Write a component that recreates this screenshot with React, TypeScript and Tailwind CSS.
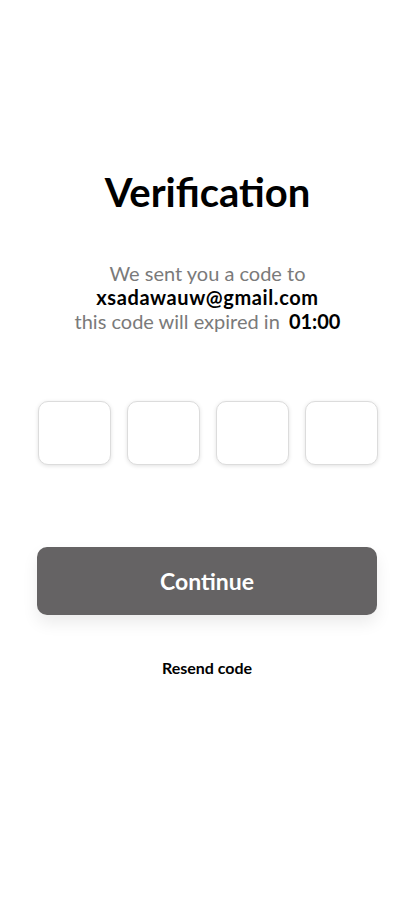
import React from 'react'

export default function App() {
    const digits = ['', '', '', '']

    return (
        <div className="min-h-[917px] w-full bg-white flex flex-col items-center font-['Lato',sans-serif]">
            {/* Header */}
            <h1 className="mt-[166px] ml-[3px] text-[40px] leading-[52px] font-bold text-black">Verification</h1>

            <div className="mt-[43px] ml-[3px] flex flex-col items-center text-[20px] leading-[24px] text-[#7a7a7a]">
                <p>We sent you a code to</p>
                <p className="font-bold text-black tracking-[0.6px]">xsadawauw@gmail.com</p>
                <p>
                    this code will expired in <span className="ml-1 font-bold text-black">01:00</span>
                </p>
            </div>

            {/* Code inputs */}
            <div className="mt-[68px] ml-[3px] flex gap-[16px]">
                {digits.map((d, i) => (
                    <input
                        key={i}
                        value={d}
                        readOnly
                        maxLength={1}
                        className="w-[73px] h-[64px] rounded-[10px] border border-[#dcdcdc] bg-white shadow-[0_1px_4px_rgba(0,0,0,0.12)] text-center text-2xl outline-none"
                    />
                ))}
            </div>

            {/* Actions */}
            <button className="mt-[82px] ml-[2px] w-[340px] h-[68px] rounded-[10px] bg-[#656364] text-white text-[23px] font-bold shadow-[0_8px_16px_rgba(0,0,0,0.08)]">
                Continue
            </button>

            <button className="mt-[41px] ml-[2px] text-[16px] font-bold text-black">Resend code</button>
        </div>
    )
}
